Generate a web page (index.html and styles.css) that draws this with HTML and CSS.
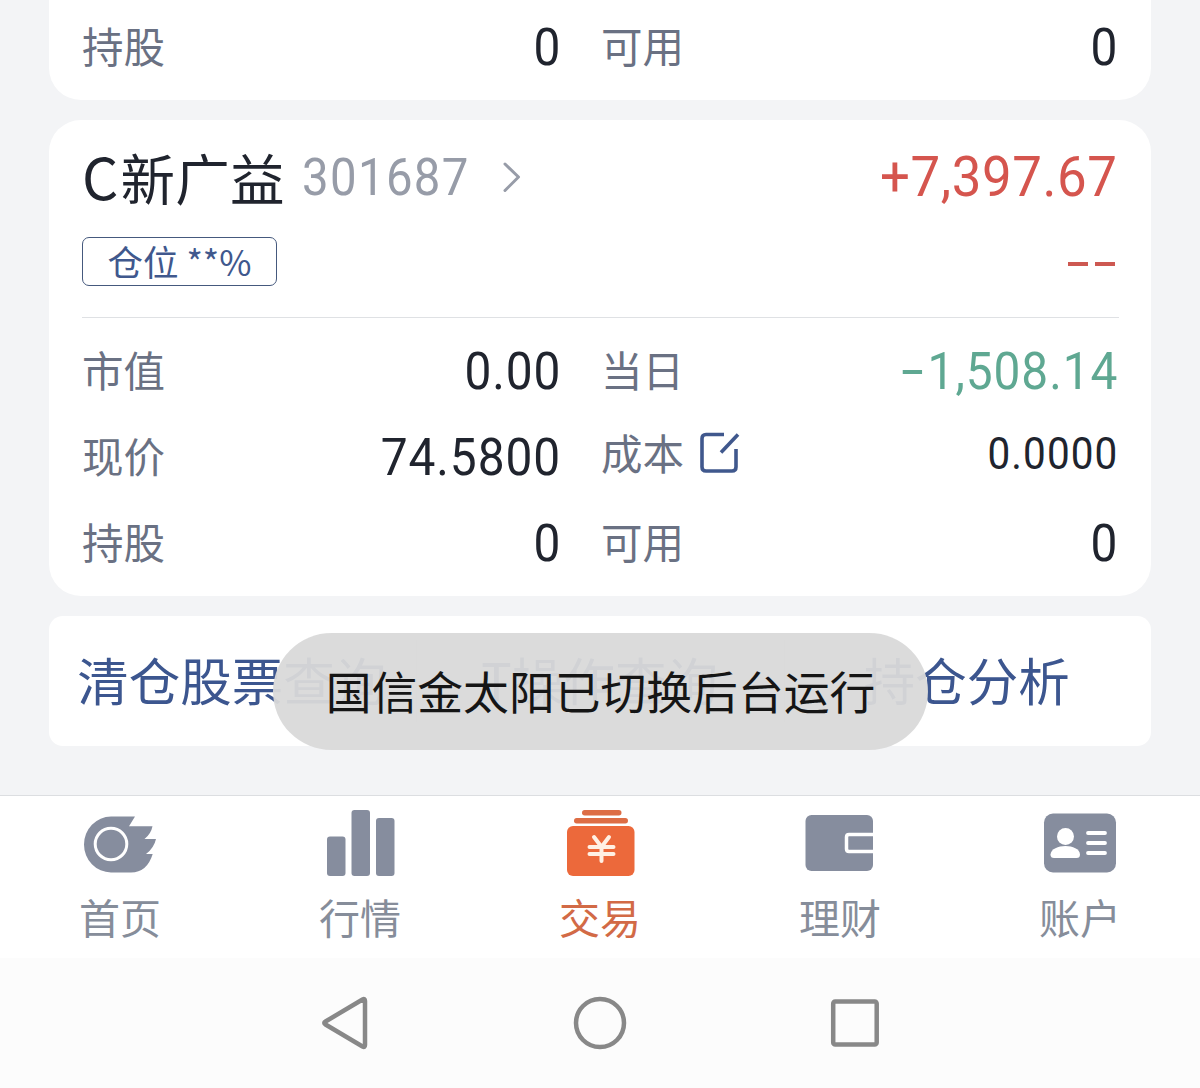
FILE: index.html
```html
<!DOCTYPE html>
<html lang="zh-CN">
<head>
    <meta charset="UTF-8">
    <meta name="viewport" content="width=device-width, initial-scale=1.0">
    <title>交易</title>
    <link rel="stylesheet" href="styles.css">
</head>
<body>
    <main class="content">
        <section class="card card-prev">
            <div class="row">
                <div class="cell"><span class="label">持股</span><span class="value">0</span></div>
                <div class="cell"><span class="label">可用</span><span class="value">0</span></div>
            </div>
        </section>

        <section class="card">
            <div class="head">
                <span class="name">C新广益</span>
                <span class="code">301687</span>
                <svg class="arrow" width="20" height="32" viewBox="0 0 20 32">
                    <path d="M3 3 L16.500 16 L3 29.500"/>
                </svg>
                <span class="profit">+7,397.67</span>
            </div>
            <div class="sub">
                <span class="tag">仓位 <span class="tag-num">**%</span></span>
                <span class="dashes"><i></i><i></i></span>
            </div>
            <div class="rows">
                <div class="row">
                    <div class="cell"><span class="label">市值</span><span class="value">0.00</span></div>
                    <div class="cell"><span class="label">当日</span><span class="value down"><i class="minus"></i>1,508.14</span></div>
                </div>
                <div class="row">
                    <div class="cell"><span class="label">现价</span><span class="value">74.5800</span></div>
                    <div class="cell cost">
                        <span class="label">成本</span>
                        <svg class="edit" width="42" height="42" viewBox="0 0 42 42">
                            <path d="M25 2.500 H7 Q3 2.500 3 6.500 V35 Q3 39 7 39 H33 Q37 39 37 35 V17"/>
                            <path d="M22 20.500 L39 2.500"/>
                        </svg>
                        <span class="value small">0.0000</span>
                    </div>
                </div>
                <div class="row">
                    <div class="cell"><span class="label">持股</span><span class="value">0</span></div>
                    <div class="cell"><span class="label">可用</span><span class="value">0</span></div>
                </div>
            </div>
        </section>

        <nav class="links">
            <a>清仓股票查询</a>
            <a>T操作查询</a>
            <a>持仓分析</a>
        </nav>
    </main>

    <nav class="tabs">
        <a class="tab">
            <svg width="80" height="72" viewBox="0 0 80 72">
                <path fill="#868d9e" d="M31 10.500 H55 L49 20.300 H72.500 Q71 28 64.500 33 H76 Q74 42 66 48 H72.700 Q67 66.500 51 66.500 H31 A27 28 0 0 1 31 10.500 Z"/>
                <circle cx="31" cy="38" r="15.800" fill="none" stroke="#fff" stroke-width="3"/>
            </svg>
            <span>首页</span>
        </a>
        <a class="tab">
            <svg width="80" height="72" viewBox="0 0 80 72" fill="#868d9e">
                <rect x="7" y="30.500" width="18.500" height="39.500" rx="3"/>
                <rect x="31.500" y="4" width="18.500" height="66" rx="3"/>
                <rect x="56" y="12" width="18.500" height="58" rx="3"/>
            </svg>
            <span>行情</span>
        </a>
        <a class="tab active">
            <svg width="80" height="72" viewBox="0 0 80 72" fill="#dd6d45">
                <rect x="22" y="4" width="39.500" height="5.500" rx="2.700"/>
                <rect x="14" y="12" width="54" height="5.500" rx="2.700"/>
                <rect x="7" y="20" width="67.500" height="50" rx="6" fill="#ec693b"/>
                <path d="M34 31 L41.500 41 L49 31 M41.500 41 V55 M29.500 41 H53.500 M29.500 48 H53.500" fill="none" stroke="#fff0e4" stroke-width="4" stroke-linecap="round"/>
            </svg>
            <span>交易</span>
        </a>
        <a class="tab">
            <svg width="80" height="72" viewBox="0 0 80 72">
                <rect x="5.500" y="9" width="67.500" height="56" rx="6" fill="#868d9e"/>
                <path d="M73.500 28.500 H49 Q46.500 28.500 46.500 31 V43 Q46.500 45.500 49 45.500 H73.500" fill="none" stroke="#fff" stroke-width="3.500"/>
            </svg>
            <span>理财</span>
        </a>
        <a class="tab">
            <svg width="80" height="72" viewBox="0 0 80 72">
                <rect x="4" y="7.500" width="72" height="59" rx="9" fill="#868d9e"/>
                <circle cx="25.500" cy="30.500" r="8.500" fill="#fff"/>
                <path d="M14 52 Q10.500 52 10.500 48.500 C11.500 37 39.500 37 40 48.500 Q40 52 36.500 52 Z" fill="#fff"/>
                <path d="M48 27 H65 M48 37 H65 M48 47 H65" stroke="#fff" stroke-width="3.800" stroke-linecap="round"/>
            </svg>
            <span>账户</span>
        </a>
    </nav>

    <footer class="system">
        <svg width="50" height="56" viewBox="0 0 50 56">
            <path d="M45 6 Q45 3.200 42.500 4.500 L5.500 26.500 Q3 28 5.500 29.500 L42.500 51.500 Q45 52.800 45 50 Z"/>
        </svg>
        <svg width="56" height="56" viewBox="0 0 56 56">
            <circle cx="28" cy="28" r="24"/>
        </svg>
        <svg width="50" height="56" viewBox="0 0 50 56">
            <rect x="3.200" y="6.500" width="43.500" height="43" rx="2"/>
        </svg>
    </footer>

    <div class="toast">国信金太阳已切换后台运行</div>
</body>
</html>
```
FILE: styles.css
```css
*{
    margin: 0;
    padding: 0;
    box-sizing: border-box;
}

body{
    width: 1200px;
    height: 1088px;
    display: flex;
    flex-direction: column;
    overflow: hidden;
    position: relative;
    background-color: #f3f4f6;
    color: #20242e;
    font-family: "Noto Sans CJK SC", sans-serif;
}

.content{
    height: 795px;
    padding: 0 49px;
    display: flex;
    flex-direction: column;
    gap: 20px;
}

.card{
    height: 476px;
    padding: 22px 32px 10px 33px;
    border-radius: 32px;
    background-color: #fff;
}
.card-prev{
    height: 100px;
    padding-top: 4px;
    border-radius: 0 0 32px 32px;
}

.head{
    height: 70px;
    display: flex;
    align-items: center;
    line-height: 70px;
}
.name{
    padding-bottom: 2px;
    font-size: 54.5px;
    letter-spacing: 0.3px;
}
.name::first-letter{
    font-size: 57px;
    letter-spacing: 2px;
}
.code{
    width: 168px;
    margin-left: 17px;
    padding-top: 2px;
    font-family: Roboto, sans-serif;
    font-size: 52px;
    letter-spacing: 1.5px;
    color: #979ca8;
    transform: scaleX(0.91);
    transform-origin: left;
}
.arrow{
    margin-left: 32px;
    fill: none;
    stroke: #979ca8;
    stroke-width: 3;
    stroke-linecap: round;
    stroke-linejoin: round;
}
.profit{
    margin-left: auto;
    margin-right: 2px;
    font-family: Roboto, sans-serif;
    font-size: 55px;
    letter-spacing: 0.6px;
    color: #d5554e;
    transform: scaleX(0.96);
    transform-origin: right;
}

.sub{
    height: 106px;
    padding-top: 25px;
    display: flex;
    justify-content: space-between;
    align-items: flex-start;
    border-bottom: 1px solid #dfe1e4;
}
.tag{
    width: 195px;
    height: 49px;
    border: 1.5px solid #45597d;
    border-radius: 7px;
    line-height: 45px;
    text-align: center;
    font-size: 35.5px;
    color: #40588d;
    white-space: nowrap;
}
.tag-num{
    font-size: 35px;
}
.dashes{
    margin: 25px 4px 0 0;
    display: flex;
    gap: 7px;
}
.dashes i{
    width: 20px;
    height: 4px;
    background-color: #cd5851;
}

.rows{
    padding-top: 10px;
}
.row{
    height: 86px;
    display: grid;
    grid-template-columns: 479px 517px;
    column-gap: 40px;
}
.cell{
    display: flex;
    align-items: center;
}
.label{
    font-size: 41.5px;
    line-height: 60px;
    padding-bottom: 4px;
    color: #6a7183;
}
.value{
    margin-left: auto;
    padding-top: 2px;
    display: flex;
    align-items: center;
    font-family: Roboto, sans-serif;
    font-size: 52px;
    line-height: 60px;
    letter-spacing: 1px;
    transform: scaleX(0.92);
    transform-origin: right;
}
.down{
    color: #5fa892;
}
.minus{
    width: 21px;
    height: 4px;
    margin-right: 6px;
    background-color: #5fa892;
}
.cost{
    padding-bottom: 7px;
}
.edit{
    margin: 0 0 2px 15px;
    fill: none;
    stroke: #40588d;
    stroke-width: 3.6;
}
.small{
    padding-top: 1px;
    font-size: 44px;
    letter-spacing: 1.2px;
}

.links{
    height: 130px;
    display: grid;
    grid-template-columns: repeat(3, 1fr);
    align-items: center;
    border-radius: 14px;
    background-color: #fff;
}
.links a{
    height: 82px;
    line-height: 78px;
    text-align: center;
    font-size: 51.5px;
    padding-right: 2px;
    color: #3c568f;
}
.links a + a{
    border-left: 1px solid #e4e6ea;
}

.tabs{
    height: 163px;
    display: grid;
    grid-template-columns: repeat(5, 1fr);
    border-top: 1px solid #dcdee1;
    background-color: #fff;
}
.tab{
    padding-top: 10px;
    display: flex;
    flex-direction: column;
    align-items: center;
    font-size: 41px;
    line-height: 60px;
    color: #868d9a;
}
.tab span{
    margin-top: 8px;
}
.active{
    color: #d26a46;
}

.system{
    height: 130px;
    padding: 0 320px;
    display: flex;
    justify-content: space-between;
    align-items: center;
    background-color: #fcfcfc;
}
.system svg{
    fill: none;
    stroke: #888;
    stroke-width: 4.5;
}

.toast{
    position: absolute;
    left: 273px;
    top: 633px;
    width: 655px;
    height: 117px;
    border-radius: 59px;
    line-height: 115px;
    text-align: center;
    font-size: 45.8px;
    color: #151515;
    background-color: rgba(217, 217, 217, 0.95);
}
```
